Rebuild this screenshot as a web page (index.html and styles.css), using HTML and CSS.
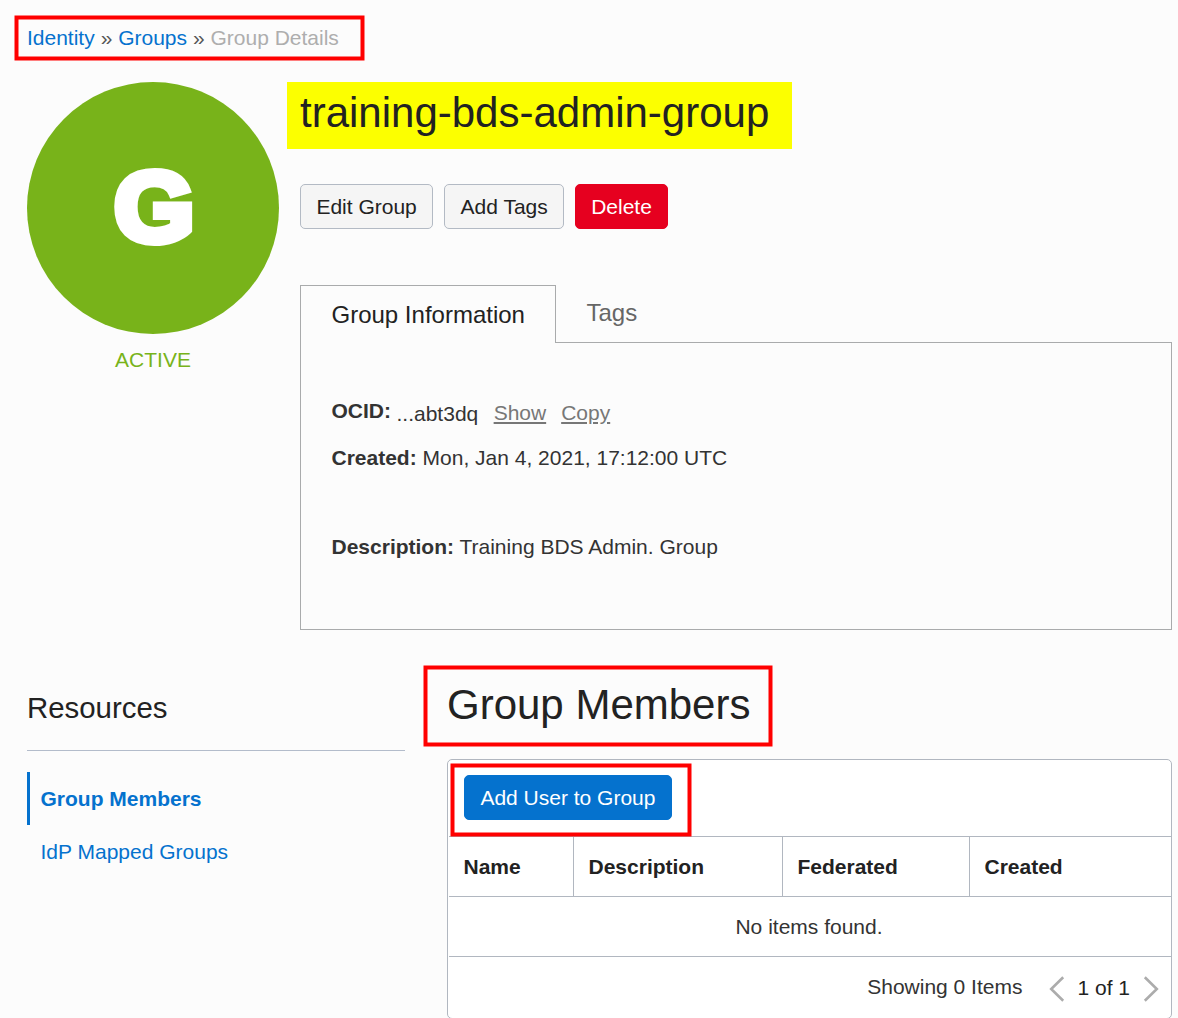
FILE: index.html
```html
<!DOCTYPE html>
<html lang="en">
<head>
<meta charset="utf-8">
<title>Group Details</title>
<link rel="stylesheet" href="styles.css">
</head>
<body>
<nav class="breadcrumb">
  <a href="#">Identity</a><span class="sep">»</span><a href="#">Groups</a><span class="sep">»</span><span class="current">Group Details</span>
  <svg class="callout callout-nav" width="351" height="46"><rect x="2.5" y="2.5" width="346" height="41"/></svg>
</nav>

<header class="summary">
  <div class="status">
    <div class="avatar"><span>G</span></div>
    <div class="state">ACTIVE</div>
  </div>
  <div class="details">
    <h1 class="title">training-bds-admin-group</h1>
    <div class="actions">
      <button class="btn">Edit Group</button>
      <button class="btn">Add Tags</button>
      <button class="btn danger">Delete</button>
    </div>
    <div class="tabs">
      <div class="tab active">Group Information</div>
      <div class="tab">Tags</div>
    </div>
    <div class="panel">
      <div class="field ocid"><b>OCID:</b><span class="value">...abt3dq</span><a href="#">Show</a><a href="#">Copy</a></div>
      <div class="field created"><b>Created:</b> Mon, Jan 4, 2021, 17:12:00 UTC</div>
      <div class="field"><b>Description:</b> Training BDS Admin. Group</div>
    </div>
  </div>
</header>

<main class="content">
  <aside class="side">
    <h2>Resources</h2>
    <a class="item selected" href="#">Group Members</a>
    <a class="item" href="#">IdP Mapped Groups</a>
  </aside>
  <section class="members">
    <h1>Group Members
      <svg class="callout callout-title" width="350" height="82"><rect x="2.5" y="2.5" width="345" height="77"/></svg>
    </h1>
    <div class="card">
      <div class="toolbar">
        <button class="btn primary">Add User to Group</button>
        <svg class="callout callout-add" width="242" height="74"><rect x="2.5" y="2.5" width="237" height="69"/></svg>
      </div>
      <div class="row head"><div>Name</div><div>Description</div><div>Federated</div><div>Created</div></div>
      <div class="row empty">No items found.</div>
      <div class="row pager">
        <span>Showing 0 Items</span>
        <svg class="chevron" width="16" height="26" viewBox="0 0 16 26"><path d="M14.2 1.3 2.2 13l12 11.7"/></svg>
        <span class="page">1 of 1</span>
        <svg class="chevron" width="16" height="26" viewBox="0 0 16 26"><path d="M1.8 1.3 13.8 13l-12 11.7"/></svg>
      </div>
    </div>
  </section>
</main>
</body>
</html>
```
FILE: styles.css
```css
* { box-sizing: border-box; }

body {
  margin: 0;
  height: 1018px;
  padding: 23px 6px 0 27px;
  overflow: hidden;
  background: #fcfcfc;
  color: #333;
  font: 21px/30px "Liberation Sans", Arial, sans-serif;
}

a { color: #0572ce; text-decoration: none; }
h1, h2 { margin: 0; font-weight: 400; color: #222; }
h1 { font-size: 42px; line-height: 59px; }

.breadcrumb { position: relative; display: flex; height: 59px; }
.sep { margin: 0 5.75px 0 6px; color: #555; }
.current { color: #aeaeae; }

.callout { position: absolute; fill: none; stroke: #f00; stroke-width: 4; }
.callout-nav { left: -13px; top: -8px; }
.callout-title { left: -24px; top: -10px; }
.callout-add { left: 1px; top: 3px; }

.summary { display: grid; grid-template-columns: 252px 1fr; gap: 21px; height: 593px; }

.avatar {
  display: grid;
  place-items: center;
  height: 252px;
  border-radius: 50%;
  background: #78b31a;
}
.avatar span {
  padding: 0 0 2px 2px;
  color: #fff;
  font-size: 98px;
  line-height: 100px;
  font-weight: 700;
  -webkit-text-stroke: 8px #fff;
  transform: scaleX(1.05);
}
.state { margin-top: 11px; text-align: center; color: #78b31a; }

.title {
  width: 505px;
  height: 67px;
  margin-left: -13px;
  padding: 1px 0 0 13px;
  background: #fcff00;
}

.actions { display: flex; gap: 11px; margin-top: 35px; }
.btn {
  height: 45px;
  padding: 1px 15.4px 0;
  border: 1px solid #b3bac4;
  border-radius: 5px;
  background: #f5f5f5;
  color: #222;
  font: inherit;
}
.danger { padding: 1px 15px 0; background: #e6001f; border-color: #e6001f; color: #fff; }
.primary { background: #0572ce; border-color: #0572ce; color: #fff; }

.tabs { display: flex; margin-top: 56px; font-size: 24px; }
.tab { height: 57px; padding: 13px 31px 0 30.5px; color: #666; white-space: nowrap; }
.tab.active {
  width: 256px;
  height: 58px;
  margin-bottom: -1px;
  padding-top: 14px;
  border: 1px solid #a9abac;
  border-bottom: 0;
  background: #fcfcfc;
  color: #222;
  z-index: 1;
}
.panel { height: 288px; padding: 53px 30.5px; border: 1px solid #a9abac; }
.field { height: 30px; white-space: nowrap; }
.ocid { display: flex; height: 47px; }
.ocid .value { margin: 3px 15.4px 0 5.5px; }
.ocid a {
  margin: 2px 15px 0 0;
  color: #777;
  text-decoration: underline;
  text-decoration-thickness: 2px;
  text-underline-offset: 2px;
}
.created { height: 89px; }

.content { display: grid; grid-template-columns: 378px 1fr; gap: 42px; }
.side h2 {
  height: 76px;
  margin-bottom: 21px;
  padding-top: 18px;
  border-bottom: 1px solid #b3bccb;
  font-size: 29.4px;
}
.item { display: block; height: 53px; padding: 12px 0 0 13.5px; }
.selected { padding-left: 10.5px; border-left: 3px solid #0572ce; font-weight: 700; }

.members h1 { position: relative; height: 84px; }
.card {
  height: 260px;
  padding-left: 1px;
  border: 1px solid #b1b7c0;
  border-radius: 5px;
  background: #fff;
}
.toolbar { position: relative; height: 76px; padding: 15px; }
.row { height: 60px; border-top: 1px solid #b1b7c0; }
.head { display: grid; grid-template-columns: 124px 209px 187px 1fr; color: #222; font-weight: 700; }
.head div { padding: 15px 0 0 14.5px; }
.head div + div { border-left: 1px solid #b1b7c0; }
.empty { padding: 15px 2px 0 0; text-align: center; }
.pager { display: flex; justify-content: flex-end; padding: 15px 12px 0 0; }
.page { margin: 1px 13px 0 12px; color: #222; }
.pager .chevron { margin-top: 4px; fill: none; stroke: #acacac; stroke-width: 2.6; }
.pager span:first-child { margin-right: 27px; }
```
